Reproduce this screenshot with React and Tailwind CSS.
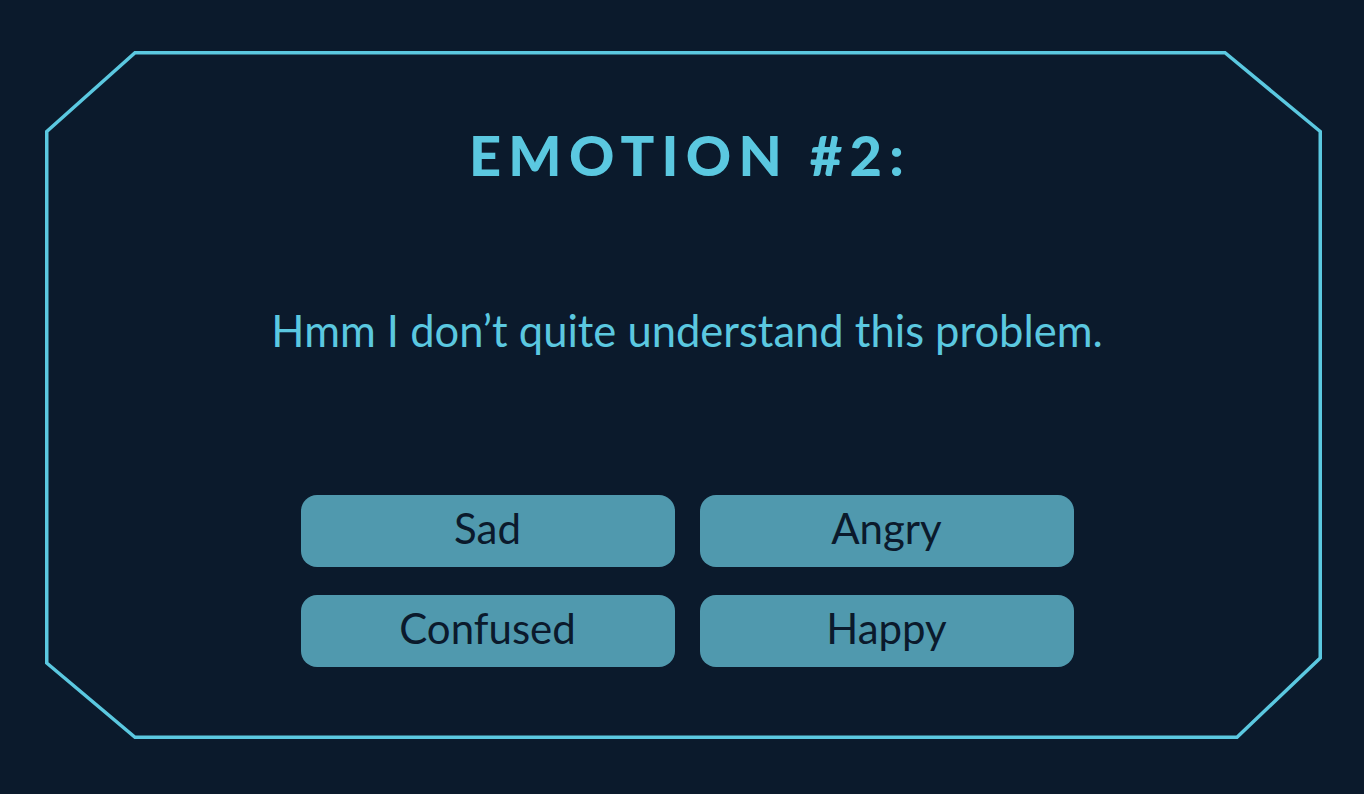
const options = ["Sad", "Angry", "Confused", "Happy"];

export default function App() {
  return (
    <div className="min-h-screen w-full bg-[#0b1a2c] pt-[51px] pl-[45px] font-['Lato','Open_Sans',sans-serif]">
      {/* Frame */}
      <div className="relative w-[1278px] h-[689px]">
        <svg
          className="absolute inset-0 pointer-events-none"
          width="1278"
          height="689"
          viewBox="0 0 1278 689"
          fill="none"
        >
          <polygon
            points="1.75,80.5 90,1.75 1180,1.75 1275.25,80.5 1275.25,607 1192,686.25 90,686.25 1.75,612"
            stroke="#5bc8e0"
            strokeWidth="3.5"
          />
        </svg>

        <div className="relative flex flex-col items-center pl-[6px]">
          <h1 className="mt-[72px] pl-[6px] text-[56px] leading-[64px] font-black tracking-[0.13em] text-[#5bc8e0]">
            EMOTION #2:
          </h1>

          <p className="mt-[117px] text-[43.5px] leading-[52px] text-[#5bc8e0]">
            Hmm I don’t quite understand this problem.
          </p>

          {/* Choices */}
          <div className="mt-[139px] grid grid-cols-2 gap-x-[25px] gap-y-[28px]">
            {options.map((o) => (
              <button
                key={o}
                className="w-[374px] h-[72px] pb-[6px] rounded-[16px] bg-[#5099ae] text-[42px] leading-[60px] text-[#0b1a2c]"
              >
                {o}
              </button>
            ))}
          </div>
        </div>
      </div>
    </div>
  );
}
